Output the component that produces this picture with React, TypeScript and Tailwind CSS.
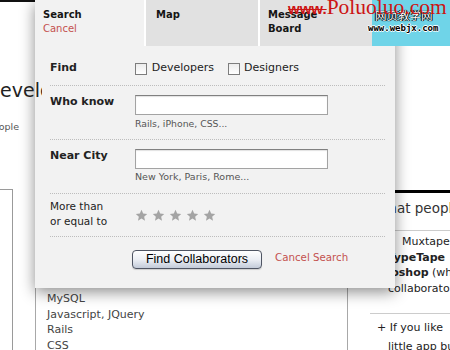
import React from "react";

const Star = () => (
  <svg width="13" height="13" viewBox="0 0 24 24" className="block">
    <polygon
      points="12,1.5 15.1,8.3 22.5,9.1 16.9,14.1 18.5,21.5 12,17.7 5.5,21.5 7.1,14.1 1.5,9.1 8.9,8.3"
      fill="#a4a4a4"
    />
  </svg>
);

const Checkbox = () => (
  <div className="mt-[2px] h-[12px] w-[12px] shrink-0 border border-[#7d7d7d] bg-linear-to-b from-[#ececec] to-white" />
);

const TextInput = () => (
  <div className="h-[20px] w-[193px] border border-[#a3a3a3] border-t-[#808080] bg-white shadow-[inset_0_1px_1px_rgba(0,0,0,0.12)]" />
);

export default function App() {
  const sans = { fontFamily: '"DejaVu Sans", "Liberation Sans", sans-serif' };
  return (
    <div
      className="relative h-[350px] w-[450px] overflow-hidden bg-white text-[#222]"
      style={sans}
    >
      <div className="h-[2px] bg-[#111]" />
      <div className="flex">
        {/* left column of the page behind */}
        <div className="flex w-[35px] shrink-0 flex-col">
          <div className="relative z-20 mt-[76px] w-[42px] overflow-hidden whitespace-nowrap text-[19px] leading-[24px] text-[#222]">
            <div className="ml-[-14.6px]">Developers</div>
          </div>
          <div className="mt-[19px] flex w-[19px] justify-end overflow-hidden whitespace-nowrap text-[9.5px] leading-[12px] text-[#555]">
            <span className="shrink-0">Find people</span>
          </div>
          <div className="mt-[56px] h-[200px] w-[13px] border-r border-t border-[#9a9a9a]" />
        </div>

        {/* middle box */}
        <div className="mt-[146px] h-[210px] w-[313px] shrink-0 border-x border-[#a8a8a8] pl-[11px] pt-[143px] text-[11px] leading-[15.7px] text-[#444]">
          <div>MySQL</div>
          <div>Javascript, JQuery</div>
          <div>Rails</div>
          <div>CSS</div>
        </div>

        {/* right column */}
        <div className="ml-[22px] w-[80px] shrink-0 whitespace-nowrap">
          <div className="mt-[188px] h-[3px] bg-black" />
          <div className="ml-[5px] mt-[7px] text-[13.5px] leading-[17px] text-[#333]">
            What peop<span className="text-[#9a5a2c]">le say</span>
          </div>
          <div className="mt-[13px] h-px bg-[#cccccc]" />
          <div className="mt-[3px] text-[11px] leading-[15.7px] text-[#222]">
            <div className="ml-[32px]">Muxtape</div>
            <div className="ml-[17.5px] font-bold">TypeTape</div>
            <div className="ml-[-7.5px]">
              <span className="font-bold">Photoshop</span> (which
            </div>
            <div className="ml-[18px]">collaborators</div>
          </div>
          <div className="mt-[16px] h-px bg-[#cccccc]" />
          <div className="mt-[4px] text-[11px] leading-[19px] text-[#222]">
            <div className="ml-[7px]">+ If you like</div>
            <div className="ml-[18px]">little app built</div>
          </div>
        </div>
      </div>

      {/* search panel overlay */}
      <div className="absolute left-[35px] top-0 z-10 w-[360px] shadow-[0_4px_14px_rgba(0,0,0,0.45)]">
        <div className="flex h-[46px] gap-[2px] bg-white text-[10px] leading-[13.5px]">
          <div className="w-[109px] bg-[#f2f2f2] pl-[8px] pt-[8px]">
            <div className="font-bold text-[#151515]">Search</div>
            <div className="text-[#c4514f]">Cancel</div>
          </div>
          <div className="w-[112px] bg-[#e1e1e1] pl-[10px] pt-[8px]">
            <div className="font-bold text-[#151515]">Map</div>
          </div>
          <div className="w-[112px] bg-[#e1e1e1] pl-[8px] pt-[8px]">
            <div className="font-bold text-[#151515]">Message</div>
            <div className="font-bold text-[#151515]">Board</div>
          </div>
          <div className="flex-1" />
        </div>

        <div className="bg-[#f2f2f2]">
          {/* Find */}
          <div className="ml-[15px] mr-[10px] flex h-[40px] border-b border-dotted border-[#bdbdbd] pt-[15px] text-[11px] leading-[14px]">
            <div className="w-[85px] shrink-0 font-bold">Find</div>
            <Checkbox />
            <span className="ml-[4.7px]">Developers</span>
            <div className="ml-[14px] flex">
              <Checkbox />
              <span className="ml-[4px]">Designers</span>
            </div>
          </div>

          {/* Who know */}
          <div className="ml-[15px] mr-[10px] flex h-[54px] border-b border-dotted border-[#bdbdbd] pt-[9px]">
            <div className="w-[85px] shrink-0 text-[11px] font-bold leading-[14px]">
              Who know
            </div>
            <div>
              <TextInput />
              <div className="mt-[2.5px] text-[9.3px] leading-[12px] text-[#555]">
                Rails, iPhone, CSS...
              </div>
            </div>
          </div>

          {/* Near City */}
          <div className="ml-[15px] mr-[10px] flex h-[54px] border-b border-dotted border-[#bdbdbd] pt-[9px]">
            <div className="w-[85px] shrink-0 text-[11px] font-bold leading-[14px]">
              Near City
            </div>
            <div>
              <TextInput />
              <div className="mt-[2px] text-[9.5px] leading-[12px] text-[#555]">
                New York, Paris, Rome...
              </div>
            </div>
          </div>

          {/* Rating */}
          <div className="ml-[15px] mr-[10px] flex h-[43px] border-b border-dotted border-[#bdbdbd] pt-[5px]">
            <div className="w-[85px] shrink-0 text-[10.5px] leading-[14.5px]">
              More than
              <br />
              or equal to
            </div>
            <div className="mt-[10px] flex gap-[4px]">
              <Star />
              <Star />
              <Star />
              <Star />
              <Star />
            </div>
          </div>

          {/* Buttons */}
          <div className="flex h-[51px] items-start pl-[97px] pt-[13px]">
            <button
              className="h-[19px] w-[130px] rounded-[4px] border border-[#4f5563] bg-linear-to-b from-white via-[#eceff4] to-[#c3cbd9] text-[12.5px] leading-[17px] text-black shadow-[0_1px_1px_rgba(0,0,0,0.15)]"
              style={{ fontFamily: '"Liberation Sans", Arial, sans-serif' }}
            >
              Find Collaborators
            </button>
            <span className="ml-[13px] text-[10.25px] leading-[15px] text-[#c4514f]">
              Cancel Search
            </span>
          </div>
        </div>
      </div>

      {/* watermark image area */}
      <div className="absolute left-[372px] top-0 z-30 h-[46px] w-[78px] bg-[#6fd4e8]" />
      <div
        className="absolute left-[375px] top-[8px] z-30 text-[11.5px] leading-[14px] text-white [text-shadow:0_0_1px_#000,0_0_1px_#000,1px_0_0_#000,-1px_0_0_#000]"
        style={{ fontFamily: '"Noto Sans CJK SC", sans-serif' }}
      >
        网页教学网
      </div>
      <div
        className="absolute left-[368px] top-[23px] z-30 text-[9px] font-bold leading-[11px] text-black [text-shadow:1px_0_0_#fff,-1px_0_0_#fff,0_1px_0_#fff,0_-1px_0_#fff]"
        style={{ fontFamily: '"DejaVu Sans Mono", monospace' }}
      >
        www.webjx.com
      </div>
      <div className="absolute left-[288px] top-[-3px] z-40 flex items-baseline whitespace-nowrap text-[#cc1414]">
        <span
          className="text-[15px] font-bold leading-[21px] line-through"
          style={{ fontFamily: '"Liberation Sans", Arial, sans-serif' }}
        >
          www.
        </span>
        <span
          className="text-[21.5px] leading-[21.5px]"
          style={{ fontFamily: '"Liberation Serif", "Times New Roman", serif' }}
        >
          Poluoluo.com
        </span>
      </div>
    </div>
  );
}
